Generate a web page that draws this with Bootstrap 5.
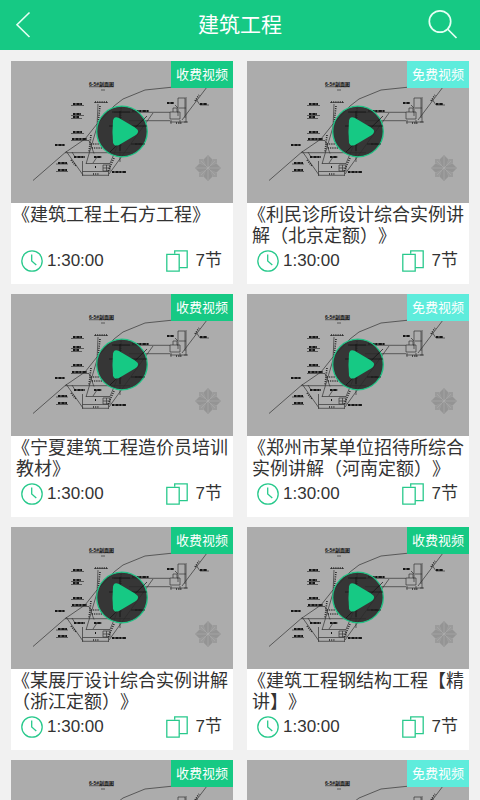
<!DOCTYPE html>
<html lang="zh-CN">
<head>
<meta charset="utf-8">
<meta name="viewport" content="width=device-width, initial-scale=1">
<title>建筑工程</title>
<link href="https://cdn.jsdelivr.net/npm/bootstrap@5.3.0/dist/css/bootstrap.min.css" rel="stylesheet">
<style>
  :root { --brand: #16c984; --free: #5eecdc; }
  body { font-family: "Liberation Sans", "Noto Sans CJK SC", sans-serif; background: #f1f1f1; color: #333; text-spacing-trim: space-all; font-kerning: none; }
  .topbar { background: var(--brand); height: 50px; }
  .topbar h1 { font-size: 21px; line-height: 30px; font-weight: 400; }
  .icon-btn { width: 60px; height: 50px; }
  .feed { padding: 11px 11px 0; scrollbar-width: none; }
  .feed::-webkit-scrollbar { display: none; }
  .feed > .row { --bs-gutter-x: 14px; --bs-gutter-y: 10px; }
  .thumb { background: #acacac; }
  .thumb svg { display: block; width: 100%; height: auto; }
  .tag { font-size: 13px; line-height: 27px; width: 62px; background: var(--brand); }
  .tag-free { background: var(--free); }
  .course-title { font-size: 18px; line-height: 21px; min-height: 46px; padding: 2px 0 0 5px; text-indent: -4px; font-weight: 400; white-space: nowrap; }
  .hang { margin-left: -4px; }
  .meta { font-size: 17px; line-height: 23px; padding: 0 11px 12px 10px; }
  .meta svg { width: 22px; height: 22px; }
</style>
<script src="https://cdn.jsdelivr.net/npm/bootstrap@5.3.0/dist/js/bootstrap.bundle.min.js"></script>
</head>
<body>
<svg class="d-none" aria-hidden="true">
  <symbol id="clock" viewBox="0 0 22 22"><g fill="none" stroke="#28c98c" stroke-width="1.3"><circle cx="11" cy="11" r="10.2"/><path d="M10.7 4.5V11l4.6 4"/></g></symbol>
  <symbol id="pages" viewBox="0 0 22 22"><g fill="none" stroke="#28c98c" stroke-width="1.3"><path d="M8.7 3.8V.8h12.500v16.800h-8"/><path d="M.8 4.300h12.400v16.900H.8z"/></g></symbol>
  <symbol id="plan" viewBox="0 0 222 142">
    <g fill="none" stroke="#333" stroke-width=".7">
      <path d="M22 119.500L54 91.700L74 78L86 63L103 45L112 38L134 29L160 26.300"/>
      <path d="M196 26L171 59M185 38l4 6h9"/>
      <path d="M103 51.300h56M118 59.700h41M142 52L98 113M54 91.700h65M55 90L72 114"/>
      <path d="M87 43L86 66L75 103M71.500 100v15M71.500 110.500H97.500V115M71.500 114.300h26M75 102.500h24l10-24"/>
      <path d="M60 44.500h13M60 54.500h13M60 57.500h11M60 72.500h13M60 79.500h18l5 13M45 103h12M45 110.500h12M78 25.700h24M90 29h4"/>
      <path d="M83 41.500h14M64 96l-3-5M82 102l4-6h5M109 51v50"/>
      <path d="M167 55V37h7v20M168 47h7M159 58v-7h3v-4h4v4h3v7zM162 51h5M175 36v25M173 61h4M159 61h17M160 59v4M169 59v4M164 44l3 3"/>
      <path d="M92 104h7v6h-7zM95.500 104v6M92 107h7"/>
    </g>
    <g fill="none" stroke="#151515" stroke-width="2.200" stroke-dasharray="2 .4 1 .3 3 .5">
      <path d="M62 43h9M62 53h8M62 56h6M62 71h9M61 78h15M44 84h10M63 96h11M83 96h7M47 102h9M47 109h9M101 111h14M156 42h7M189 43h7M121 50h17M124 83h7M84 106h1"/>
    </g>
    <g fill="none" stroke="#252525" stroke-width="1.600" stroke-dasharray="1 1.200">
      <path d="M84 41h12M89 45l-2 18M80 74l-2 17M60 99l5 6M110 45v40M103 97l-6 13M184 40l4-6M80 83h8M81 87h10M82 113h6M165 62h6"/>
    </g>
    <text x="78" y="24.500" font-size="5" font-weight="700" fill="#111">6-5#剖面图</text>
    <g transform="translate(197 107)">
      <g fill="#949494">
        <path d="M0-13l4.500 4.500L1 0h-2l-3.500-8.500zM0 13l4.500-4.500L1 0h-2l-3.500 8.500zM-13 0l4.500-4.500L0-1v2l-8.500 3.500zM13 0L8.500-4.500 0-1v2l8.500 3.500z"/>
        <path d="M-9-9h4l4 8-8-4zM9-9H5L1-1l8-4zM-9 9h4l4-8-8 4zM9 9H5L1 1l8 4z" opacity=".7"/>
      </g>
      <path d="M0-12V12M-12 0H12M-7-7L7 7M-7 7L7-7" stroke="#acacac" stroke-width=".6"/>
    </g>
    <circle cx="111" cy="70.500" r="25.300" fill="#292929" fill-opacity=".9" stroke="#20c486" stroke-width="1.300"/>
    <path d="M109 50v40M98 65h38M99 91L136 55M101 51h18M120 83h14" fill="none" stroke="#111" stroke-width=".7"/>
    <path d="M102 59.500Q103 54.500 108 57L124 66.500Q130 70.500 124 74.500L108 84Q103 86 102 81.500Q101 70.500 102 59.500Z" fill="#16c984"/>
  </symbol>
</svg>

<div class="d-flex flex-column vh-100">
  <header class="topbar d-flex align-items-center justify-content-between flex-shrink-0 text-white">
    <button type="button" class="icon-btn btn p-0 border-0" aria-label="返回">
      <svg width="60" height="50" viewBox="0 0 60 50" fill="none" stroke="#e4fff3" stroke-width="1.600"><path d="M29.500 12.500L17 24.700L29.500 37"/></svg>
    </button>
    <h1 class="m-0">建筑工程</h1>
    <button type="button" class="icon-btn btn p-0 border-0" aria-label="搜索">
      <svg width="60" height="50" viewBox="0 0 60 50" fill="none" stroke="#e4fff3" stroke-width="1.700"><circle cx="20" cy="21.500" r="10.700"/><path d="M27.500 29L36.500 38"/></svg>
    </button>
  </header>

  <main class="feed flex-grow-1 overflow-auto">
    <div class="row row-cols-2">
      <div class="col"><article class="bg-white">
        <div class="thumb position-relative"><svg viewBox="0 0 222 142"><use href="#plan"/></svg><span class="tag position-absolute top-0 end-0 text-white text-center">收费视频</span></div>
        <h2 class="course-title m-0">《建筑工程土石方工程》</h2>
        <div class="meta d-flex align-items-center"><svg><use href="#clock"/></svg><span class="ms-1 me-auto">1:30:00</span><svg><use href="#pages"/></svg><span class="ms-2">7节</span></div>
      </article></div>
      <div class="col"><article class="bg-white">
        <div class="thumb position-relative"><svg viewBox="0 0 222 142"><use href="#plan"/></svg><span class="tag tag-free position-absolute top-0 end-0 text-white text-center">免费视频</span></div>
        <h2 class="course-title m-0">《利民诊所设计综合实例讲<br>解（北京定额）》</h2>
        <div class="meta d-flex align-items-center"><svg><use href="#clock"/></svg><span class="ms-1 me-auto">1:30:00</span><svg><use href="#pages"/></svg><span class="ms-2">7节</span></div>
      </article></div>
      <div class="col"><article class="bg-white">
        <div class="thumb position-relative"><svg viewBox="0 0 222 142"><use href="#plan"/></svg><span class="tag position-absolute top-0 end-0 text-white text-center">收费视频</span></div>
        <h2 class="course-title m-0">《宁夏建筑工程造价员培训<br>教材》</h2>
        <div class="meta d-flex align-items-center"><svg><use href="#clock"/></svg><span class="ms-1 me-auto">1:30:00</span><svg><use href="#pages"/></svg><span class="ms-2">7节</span></div>
      </article></div>
      <div class="col"><article class="bg-white">
        <div class="thumb position-relative"><svg viewBox="0 0 222 142"><use href="#plan"/></svg><span class="tag tag-free position-absolute top-0 end-0 text-white text-center">免费视频</span></div>
        <h2 class="course-title m-0">《郑州市某单位招待所综合<br>实例讲解（河南定额）》</h2>
        <div class="meta d-flex align-items-center"><svg><use href="#clock"/></svg><span class="ms-1 me-auto">1:30:00</span><svg><use href="#pages"/></svg><span class="ms-2">7节</span></div>
      </article></div>
      <div class="col"><article class="bg-white">
        <div class="thumb position-relative"><svg viewBox="0 0 222 142"><use href="#plan"/></svg><span class="tag position-absolute top-0 end-0 text-white text-center">收费视频</span></div>
        <h2 class="course-title m-0">《某展厅设计综合实例讲解<br><span class="hang">（浙江定额）》</span></h2>
        <div class="meta d-flex align-items-center"><svg><use href="#clock"/></svg><span class="ms-1 me-auto">1:30:00</span><svg><use href="#pages"/></svg><span class="ms-2">7节</span></div>
      </article></div>
      <div class="col"><article class="bg-white">
        <div class="thumb position-relative"><svg viewBox="0 0 222 142"><use href="#plan"/></svg><span class="tag position-absolute top-0 end-0 text-white text-center">收费视频</span></div>
        <h2 class="course-title m-0">《建筑工程钢结构工程【精<br>讲】》</h2>
        <div class="meta d-flex align-items-center"><svg><use href="#clock"/></svg><span class="ms-1 me-auto">1:30:00</span><svg><use href="#pages"/></svg><span class="ms-2">7节</span></div>
      </article></div>
      <div class="col"><article class="bg-white">
        <div class="thumb position-relative"><svg viewBox="0 0 222 142"><use href="#plan"/></svg><span class="tag position-absolute top-0 end-0 text-white text-center">收费视频</span></div>
      </article></div>
      <div class="col"><article class="bg-white">
        <div class="thumb position-relative"><svg viewBox="0 0 222 142"><use href="#plan"/></svg><span class="tag tag-free position-absolute top-0 end-0 text-white text-center">免费视频</span></div>
      </article></div>
    </div>
  </main>
</div>
</body>
</html>
